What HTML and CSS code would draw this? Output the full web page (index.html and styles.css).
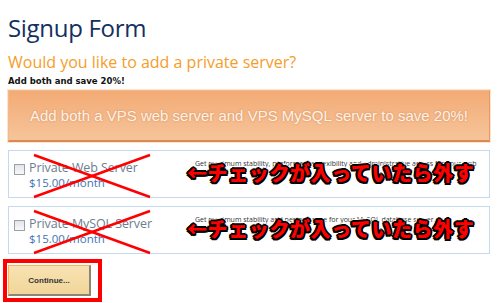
FILE: index.html
```html
<!DOCTYPE html>
<html>
<head>
<meta charset="utf-8">
<link rel="stylesheet" href="styles.css">
</head>
<body>
<div class="page">
  <h1 class="title">Signup Form</h1>
  <h2 class="subtitle">Would you like to add a private server?</h2>
  <p class="save-note">Add both and save 20%!</p>
  <div class="banner">Add both a VPS web server and VPS MySQL server to save 20%!</div>

  <div class="product">
    <div class="product-main">
      <span class="check"></span>
      <div class="product-info">
        <div class="product-name">Private Web Server</div>
        <div class="product-price">$15.00/month</div>
      </div>
    </div>
    <div class="product-desc">Get maximum stability, performance, flexibility and administrative access for your web server.</div>
    <svg class="cross" width="120" height="46" viewBox="0 0 120 46"><line x1="2" y1="2" x2="118" y2="44"/><line x1="2" y1="44" x2="118" y2="2"/></svg>
    <div class="note">←チェックが入っていたら外す</div>
  </div>

  <div class="product">
    <div class="product-main">
      <span class="check"></span>
      <div class="product-info">
        <div class="product-name">Private MySQL Server</div>
        <div class="product-price">$15.00/month</div>
      </div>
    </div>
    <div class="product-desc">Get maximum stability and performance for your MySQL database server.</div>
    <svg class="cross" width="120" height="46" viewBox="0 0 120 46"><line x1="2" y1="2" x2="118" y2="44"/><line x1="2" y1="44" x2="118" y2="2"/></svg>
    <div class="note">←チェックが入っていたら外す</div>
  </div>

  <div class="highlight">
    <button class="continue">Continue...</button>
  </div>
</div>
</body>
</html>
```

FILE: styles.css
```css
html, body {
  margin: 0;
  padding: 0;
  background: #ffffff;
}
.page {
  padding: 0 10px 0 8px;
  font-family: "Open Sans", "DejaVu Sans", sans-serif;
}
.title {
  margin: 0;
  padding-top: 12px;
  font-size: 24px;
  line-height: 32px;
  font-weight: 400;
  color: #14305e;
  letter-spacing: -0.3px;
}
.subtitle {
  margin: 8px 0 0;
  font-size: 16px;
  line-height: 20px;
  font-weight: 400;
  color: #f59d2a;
}
.save-note {
  margin: 4px 0 0;
  font-family: "DejaVu Sans", sans-serif;
  font-size: 8.5px;
  line-height: 11px;
  font-weight: 700;
  color: #111;
}
.banner {
  margin-top: 3px;
  height: 52px;
  box-sizing: border-box;
  border: 1px solid #f3b98b;
  border-bottom: 2px solid #d98952;
  border-right: 1px solid #e39a66;
  background: linear-gradient(#f3ab75, #f6c49a);
  color: #fdf3ea;
  font-family: "Liberation Sans", Arial, sans-serif;
  font-size: 15px;
  display: flex;
  align-items: center;
  justify-content: center;
  text-shadow: 0 0 2px rgba(180, 90, 30, 0.5);
  box-shadow: 0 0 0 1px #fbe3cf;
}
.product {
  position: relative;
  margin-top: 8px;
  height: 48px;
  box-sizing: border-box;
  border: 1px solid #c6d8ee;
  display: flex;
  align-items: flex-start;
}
.product-main {
  width: 181px;
  display: flex;
  align-items: flex-start;
  padding: 9px 0 0 5px;
}
.check {
  width: 9px;
  height: 9px;
  margin-top: 4px;
  border: 1px solid #9aa0a8;
  background: linear-gradient(#e2e4e8, #f8f8f8);
  flex: none;
}
.product-info {
  margin-left: 4px;
}
.product-name {
  font-size: 12.5px;
  line-height: 15px;
  color: #6c7d8f;
  letter-spacing: -0.1px;
}
.product-price {
  font-size: 11.5px;
  line-height: 15px;
  color: #3f74b3;
}
.product-desc {
  padding-top: 8px;
  width: 290px;
  font-size: 7px;
  line-height: 9px;
  color: #333;
}
.cross {
  position: absolute;
  left: 23px;
  top: 2px;
}
.cross line {
  stroke: #ff0000;
  stroke-width: 2.5;
}
.note {
  position: absolute;
  left: 178px;
  top: 10px;
  font-family: "Noto Sans CJK JP", sans-serif;
  font-size: 20px;
  line-height: 24px;
  font-weight: 900;
  color: #ff0000;
  letter-spacing: 0.6px;
  white-space: nowrap;
  text-shadow:
    2px 0 0 #000, -2px 0 0 #000, 0 2px 0 #000, 0 -2px 0 #000,
    1.5px 1.5px 0 #000, -1.5px 1.5px 0 #000, 1.5px -1.5px 0 #000, -1.5px -1.5px 0 #000,
    3px 0 1px #fff, -3px 0 1px #fff, 0 3px 1px #fff, 0 -3px 1px #fff;
}
.highlight {
  margin: 5px 0 0 -5px;
  width: 87px;
  padding: 2px 3px 2px 1px;
  border: 4px solid #ff0000;
}
.continue {
  display: block;
  width: 83px;
  height: 31px;
  box-sizing: border-box;
  border: 1px solid #f5b559;
  border-right: 2px solid #8f8574;
  border-bottom: 2px solid #8f8574;
  background: linear-gradient(#f8e2b2, #f1d69a);
  font-family: "Liberation Sans", Arial, sans-serif;
  font-size: 8px;
  font-weight: 700;
  color: #333;
  padding: 0;
}
```
